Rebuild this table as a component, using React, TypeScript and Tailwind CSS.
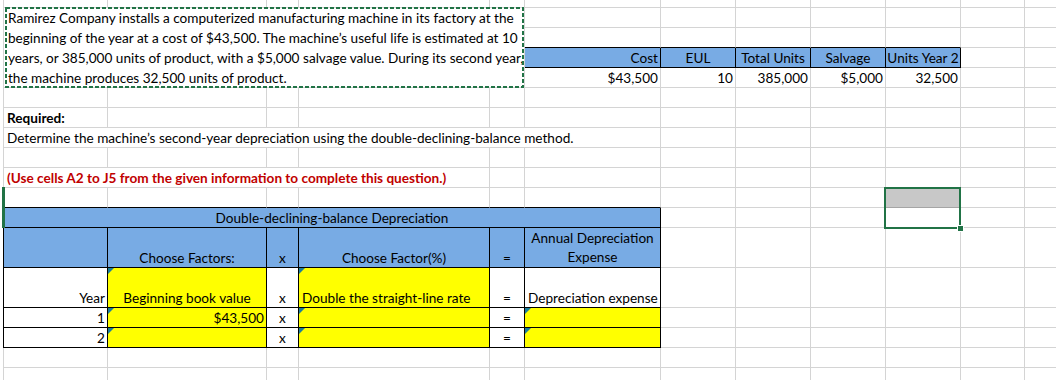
import React from "react";

type Spec = { c?: string; t?: React.ReactNode; tri?: boolean };

// border colour combos (right / bottom)
const G = "border-r-[#d4d4d4] border-b-[#d4d4d4]";
const K = "border-r-black border-b-black";
const GK = "border-r-[#d4d4d4] border-b-black";
const LG = "border-l border-l-[#d4d4d4]";
const LK = "border-l border-l-black";
const BLUE = "bg-[#78abe4]";
const YEL = "bg-[#ffff00]";
const R = "justify-end pr-[2px]";
const C = "justify-center";
const L = "pl-[3px]";

const blank = (n: number): Spec[] => Array.from({ length: n }, () => ({ c: G }));
const emptyRow = (): Spec[] => [{ c: `${G} ${LG}` }, ...blank(11)];

const rows: Spec[][] = [
  emptyRow(),
  [
    {
      c: `col-span-5 row-span-4 ${G} ${LG} items-start pl-[4px]`,
      t: (
        <span className="leading-[20px]">
          Ramirez Company installs a computerized manufacturing machine in its factory at the
          <br />
          beginning of the year at a cost of $43,500. The machine’s useful life is estimated at 10
          <br />
          years, or 385,000 units of product, with a $5,000 salvage value. During its second year,
          <br />
          the machine produces 32,500 units of product.
        </span>
      ),
    },
    ...blank(7),
  ],
  [...Array.from({ length: 5 }, () => ({ c: GK })), ...blank(2)],
  [
    { c: `${K} ${BLUE} ${R}`, t: "Cost" },
    { c: `${K} ${BLUE} ${C}`, t: "EUL" },
    { c: `${K} ${BLUE} ${C}`, t: "Total Units" },
    { c: `${K} ${BLUE} ${C}`, t: "Salvage" },
    { c: `${K} ${BLUE} ${C}`, t: "Units Year 2" },
    ...blank(2),
  ],
  [
    { c: `${G} ${R}`, t: "$43,500" },
    { c: `${G} ${R}`, t: "10" },
    { c: `${G} ${R}`, t: "385,000" },
    { c: `${G} ${R}`, t: "$5,000" },
    { c: `${G} ${R}`, t: "32,500" },
    ...blank(2),
  ],
  emptyRow(),
  [{ c: `${G} ${LG} ${L} font-bold`, t: "Required:" }, ...blank(11)],
  [
    {
      c: `col-span-6 ${G} ${LG} ${L}`,
      t: "Determine the machine’s second-year depreciation using the double-declining-balance method.",
    },
    ...blank(6),
  ],
  emptyRow(),
  [
    {
      c: `col-span-4 ${G} ${LG} ${L} font-bold text-[#c00000]`,
      t: "(Use cells A2 to J5 from the given information to complete this question.)",
    },
    ...blank(8),
  ],
  [
    { c: `${GK} ${LG}` },
    ...Array.from({ length: 5 }, () => ({ c: GK })),
    ...blank(3),
    { c: "border-r-[#d4d4d4] border-b-[#a5a5a5] bg-[#c8c8c8]" },
    ...blank(2),
  ],
  [
    { c: `col-span-6 ${K} ${LK} ${BLUE} ${C}`, t: "Double-declining-balance Depreciation" },
    ...blank(6),
  ],
  [
    { c: `${K} ${LK} ${BLUE}` },
    { c: `${K} ${BLUE} ${C}`, t: "Choose Factors:" },
    { c: `${K} ${BLUE} ${C}`, t: "x" },
    { c: `${K} ${BLUE} ${C}`, t: "Choose Factor(%)" },
    { c: `${K} ${BLUE} ${C}`, t: "=" },
    {
      c: `${K} ${BLUE} ${C} text-center`,
      t: (
        <span className="leading-[19px]">
          Annual Depreciation
          <br />
          Expense
        </span>
      ),
    },
    ...blank(6),
  ],
  [
    { c: `${K} ${LK} ${R}`, t: "Year" },
    { c: `${K} ${YEL} ${C}`, t: "Beginning book value", tri: true },
    { c: `${K} ${C}`, t: "x" },
    { c: `${K} ${YEL} ${L}`, t: "Double the straight-line rate", tri: true },
    { c: `${K} ${C}`, t: "=" },
    { c: `${K} ${L}`, t: "Depreciation expense" },
    ...blank(6),
  ],
  [
    { c: `${K} ${LK} ${R}`, t: "1" },
    { c: `${K} ${YEL} ${R}`, t: "$43,500", tri: true },
    { c: `${K} ${C}`, t: "x" },
    { c: `${K} ${YEL}`, tri: true },
    { c: `${K} ${C}`, t: "=" },
    { c: `${K} ${YEL}`, tri: true },
    ...blank(6),
  ],
  [
    { c: `${K} ${LK} ${R}`, t: "2" },
    { c: `${K} ${YEL}`, tri: true },
    { c: `${K} ${C}`, t: "x" },
    { c: `${K} ${YEL}`, tri: true },
    { c: `${K} ${C}`, t: "=" },
    { c: `${K} ${YEL}`, tri: true },
    ...blank(6),
  ],
  emptyRow(),
  emptyRow(),
];

const Cell = ({ c = "", t, tri }: Spec) => (
  <div className={`relative flex items-end whitespace-nowrap border-r border-b leading-[18px] ${c}`}>
    {tri && (
      <span className="absolute left-0 top-0 h-0 w-0 border-r-[6px] border-t-[6px] border-r-transparent border-t-[#1b7e9a]" />
    )}
    {t}
  </div>
);

export default function App() {
  return (
    <div className="relative h-[380px] w-[1056px] overflow-hidden bg-white font-['Lato',sans-serif] text-[13.6px] text-black">
      <div className="ml-[3px] grid grid-cols-[105px_159px_32px_191px_35px_136px_75px_75px_75px_75px_64px_100px] grid-rows-[8px_repeat(11,20px)_40px_40px_repeat(4,20px)]">
        {rows.map((r, i) => r.map((cell, j) => <Cell key={`${i}-${j}`} {...cell} />))}
      </div>

      {/* copy marquee round the question text */}
      <svg className="absolute left-[5px] top-[7px]" width="519" height="81">
        <rect x="1" y="1" width="517" height="79" fill="none" stroke="#217346" strokeWidth="2" strokeDasharray="4 2" />
      </svg>

      {/* row header highlight */}
      <div className="absolute left-[2px] top-[187px] h-[41px] w-[3px] bg-[#217346]" />

      {/* selected range */}
      <div className="absolute left-[884px] top-[187px] h-[42px] w-[77px] border-2 border-[#217346]" />
      <div className="absolute left-[957px] top-[225px] h-[7px] w-[7px] border border-white bg-[#217346]" />
    </div>
  );
}
